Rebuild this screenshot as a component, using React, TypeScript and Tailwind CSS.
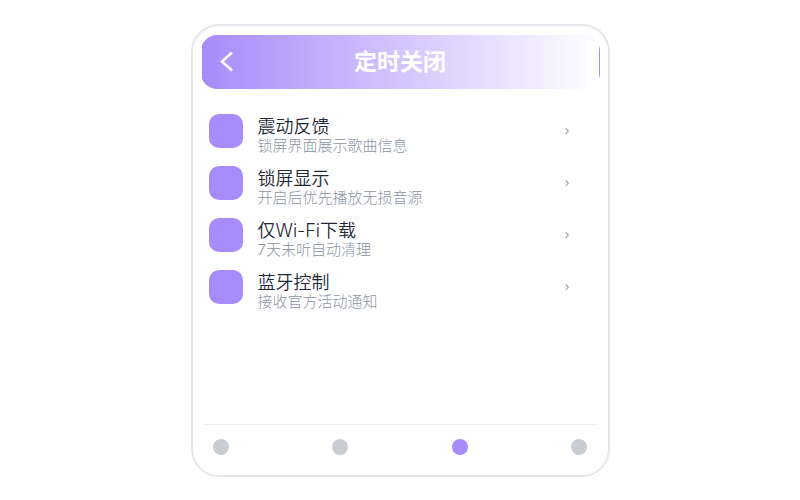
import React from 'react';

const SETTINGS = [
  { title: '震动反馈', description: '锁屏界面展示歌曲信息' },
  { title: '锁屏显示', description: '开启后优先播放无损音源' },
  { title: '仅Wi-Fi下载', description: '7天未听自动清理' },
  { title: '蓝牙控制', description: '接收官方活动通知' },
];

const TABS = [
  { label: '首页', active: false },
  { label: '发现', active: false },
  { label: '设置', active: true },
  { label: '我的', active: false },
];

const Header: React.FC = () => (
  <header className="flex items-center h-[54px] px-4 rounded-2xl border border-transparent bg-linear-to-r/srgb from-[#a78bfa] to-white">
    <button type="button" aria-label="返回" className="w-4 h-6 flex items-center justify-center text-white">
      <svg width="14" height="20" viewBox="0 0 14 20" fill="none" stroke="currentColor" strokeWidth="2.6">
        <path d="M13 .5L3 9.5l10 9" />
      </svg>
    </button>
    <h1 className="flex-1 pr-4 text-center text-[23px] leading-8 font-bold text-white">定时关闭</h1>
  </header>
);

const SettingsList: React.FC = () => (
  <ul className="flex-1 flex flex-col gap-3 pt-[22px] pl-2 pr-[30px]">
    {SETTINGS.map((item) => (
      <li key={item.title}>
        <button type="button" className="w-full h-10 flex items-center gap-[15px] text-left">
          <span className="w-[34px] h-[34px] shrink-0 rounded-[10px] bg-[#a78bfa]"></span>
          <span className="flex-1 flex flex-col pt-[10px]">
            <span className="text-[18px] leading-5 text-[#1f2937]">{item.title}</span>
            <span className="text-[15px] leading-[18px] font-light text-[#8b93a1]">{item.description}</span>
          </span>
          <span className="pb-1 text-[15px] leading-5 font-normal font-['Noto_Sans',sans-serif] text-[#9ca3af]">›</span>
        </button>
      </li>
    ))}
  </ul>
);

const TabBar: React.FC = () => (
  <nav className="flex items-center justify-between mx-[2px] px-[10px] h-[44px] border-t border-[#f0f0f3]">
    {TABS.map((tab) => (
      <button
        key={tab.label}
        type="button"
        aria-label={tab.label}
        className={tab.active ? 'w-4 h-4 rounded-full bg-[#a78bfa]' : 'w-4 h-4 rounded-full bg-[#c8ccd3]'}
      ></button>
    ))}
  </nav>
);

const App: React.FC = () => {
  return (
    <main className="min-h-screen flex justify-center pt-6 pb-[23px] bg-white font-[350] font-['Inter','Noto_Sans_CJK_SC',sans-serif]">
      <div className="w-full max-w-[419px] flex flex-col pt-[9px] pb-[7px] px-2 rounded-[28px] border-2 border-[#e5e5eb] bg-white">
        <Header />
        <SettingsList />
        <TabBar />
      </div>
    </main>
  );
};

export default App;
